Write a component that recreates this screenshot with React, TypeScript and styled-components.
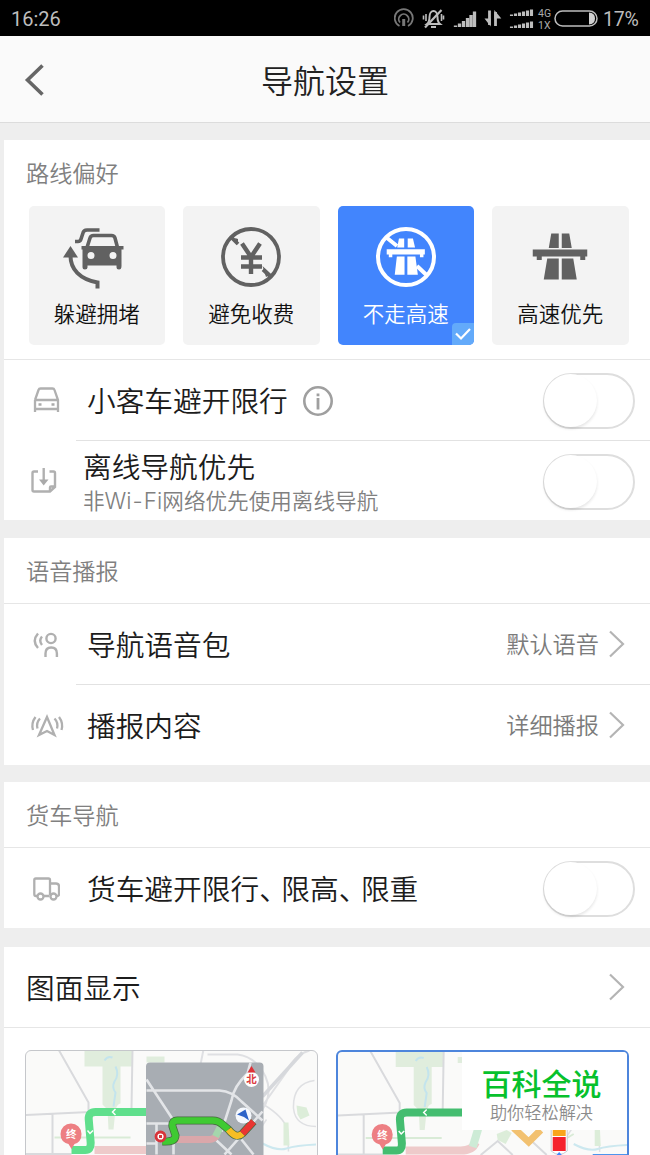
import React from 'react';
import styled, { createGlobalStyle, css } from 'styled-components';

const GlobalStyle = createGlobalStyle`
  * { box-sizing: border-box; }
  html, body { margin: 0; padding: 0; background: #eee; }
  body { font-family: Roboto, "Noto Sans CJK SC", sans-serif; color: #222; }
  svg { display: block; flex: none; }
`;

const Screen = styled.div`
  width: 650px;
  height: 1155px;
  overflow: hidden;
  background: #eee;
  display: flex;
  flex-direction: column;
`;

const StatusBar = styled.header`
  height: 36px;
  flex: none;
  background: #000;
  color: #bdbdbd;
  display: flex;
  align-items: center;
  justify-content: space-between;
  padding: 2px 11px 0;
  font-size: 20px;
  line-height: 34px;
`;

const StatusIcons = styled.div`
  display: flex;
  align-items: center;
`;

const Percent = styled.span`
  width: 36px;
  margin-left: 5px;
  padding-top: 1px;
  font-size: 19.5px;
  letter-spacing: -0.2px;
`;

const NavBar = styled.div`
  height: 87px;
  flex: none;
  background: #fafafa;
  border-bottom: 1px solid #dcdcdc;
  display: grid;
  grid-template-columns: 70px 1fr 70px;
  align-items: center;
`;

const BackButton = styled.button`
  border: 0;
  background: none;
  padding: 2px 0 0 24px;
`;

const PageTitle = styled.h1`
  margin: 0;
  font: 350 32px/44px "Noto Sans CJK SC DemiLight", "Noto Sans CJK SC", sans-serif;
  text-align: center;
`;

const Panel = styled.section<{ $gap: number; $height: number }>`
  margin: ${(p) => p.$gap}px 0 0 4px;
  height: ${(p) => p.$height}px;
  flex: none;
  background: #fff;
`;

const PanelTitle = styled.h2<{ $divided?: boolean }>`
  margin: 0;
  height: 66px;
  padding: 2px 0 0 22px;
  font-size: 23.2px;
  font-weight: 350;
  line-height: 65px;
  color: #808080;
  ${(p) => p.$divided && css`border-bottom: 1px solid #e6e6e6;`}
`;

const Tiles = styled.div`
  display: grid;
  grid-template-columns: repeat(4, 136.5px);
  column-gap: 18px;
  padding: 0 0 14px 24.5px;
  border-bottom: 1px solid #e6e6e6;
`;

const Tile = styled.button<{ $active?: boolean }>`
  position: relative;
  overflow: hidden;
  height: 139px;
  padding: 19px 0 0;
  border: 0;
  border-radius: 5px;
  background: ${(p) => (p.$active ? '#4285fd' : '#f3f3f3')};
  color: ${(p) => (p.$active ? '#fff' : '#111')};
  font: 350 21.5px/30px "Noto Sans CJK SC", sans-serif;
  display: flex;
  flex-direction: column;
  align-items: center;
  gap: 9px;
`;

const TickBadge = styled.span`
  position: absolute;
  right: 0;
  bottom: 0;
  width: 22px;
  height: 22px;
  border-top-left-radius: 4px;
  background: #63aafa;
`;

const Row = styled.div<{ $height?: number }>`
  height: ${(p) => p.$height ?? 80}px;
  display: flex;
  align-items: center;
  padding: 0 15px 0 28px;
`;

const InsetDivider = styled.div`
  height: 1px;
  margin-left: 72px;
  background: #e2e2e2;
`;

const IconSlot = styled.span<{ $width?: number }>`
  width: ${(p) => p.$width ?? 55}px;
  padding-top: 1px;
  flex: none;
`;

const Label = styled.span<{ $compact?: boolean }>`
  padding-top: ${(p) => (p.$compact ? 0 : 4)}px;
  font-size: 28.7px;
  font-weight: 350;
  line-height: 40px;
  color: #1c1c1c;
  white-space: nowrap;
`;

const Comma = styled.span`
  letter-spacing: -6.5px;
`;

const LabelStack = styled.div`
  display: flex;
  flex-direction: column;
  padding-top: 2px;
`;

const Hint = styled.span`
  font-size: 21.6px;
  font-weight: 350;
  line-height: 26px;
  color: #808080;
  white-space: nowrap;
`;

const Latin = styled.span`
  font-family: Inter, "Open Sans", sans-serif;
  font-size: 22.5px;
  font-weight: 300;
`;

const Hyphen = styled.span`
  margin: 0 1px;
`;

const Spacer = styled.span`
  flex: 1;
`;

const Value = styled.span`
  padding-top: 2px;
  font-size: 23.2px;
  font-weight: 350;
  line-height: 34px;
  color: #7b7b7b;
  margin-right: 9px;
`;

const ChevronSlot = styled.span`
  width: 27px;
`;

const SwitchTrack = styled.button`
  width: 92px;
  height: 56px;
  margin-top: 2px;
  padding: 0;
  border: 2px solid #dedede;
  border-radius: 28px;
  background: #fff;
`;

const SwitchKnob = styled.span`
  display: block;
  width: 53px;
  height: 53px;
  margin: -1px 0 0 -1px;
  border-radius: 50%;
  background: #fff;
  box-shadow: 0 2px 3px rgba(0, 0, 0, 0.1);
`;

const PreviewHeader = styled(Row)`
  padding-left: 22px;
  height: 81px;
  border-bottom: 1px solid #e6e6e6;
`;

const Previews = styled.div`
  display: grid;
  grid-template-columns: 293px 293px;
  column-gap: 18px;
  padding: 22px 0 0 21px;
`;

const PreviewCard = styled.div<{ $active?: boolean }>`
  position: relative;
  height: 180px;
  overflow: hidden;
  border: ${(p) => (p.$active ? '2px solid #4d85dc' : '1.5px solid #c5c7cb')};
  border-radius: 6px;
  background: #fafaf9;
`;

const Watermark = styled.div`
  position: absolute;
  top: 0;
  left: 124px;
  right: 0;
  height: 78px;
  padding: 12px 6px 0 0;
  background: #fff;
  display: flex;
  flex-direction: column;
  align-items: center;
`;

const Brand = styled.strong`
  font-size: 30px;
  font-weight: 500;
  line-height: 42px;
  color: #07c12c;
`;

const Slogan = styled.span`
  font-size: 17.2px;
  font-weight: 350;
  line-height: 14px;
  color: #8c8c8c;
`;

const Switch = () => (
  <SwitchTrack role="switch" aria-checked={false}>
    <SwitchKnob />
  </SwitchTrack>
);

const Chevron = () => (
  <ChevronSlot>
    <svg width="18" height="28" viewBox="0 0 18 28" fill="none" stroke="#b4b4b4" strokeWidth="2.2">
      <path d="M2 1.5 15 14 2 26.5" />
    </svg>
  </ChevronSlot>
);

const StatusGlyphs = () => (
  <svg width="204" height="30" viewBox="394 4 204 30" fill="none" stroke="#bdbdbd">
    <g stroke="#777" strokeWidth="1.8">
      <path d="M399.5 26a9 9 0 1 1 8.500 0" />
      <path d="M400 22.500a5 5 0 1 1 7.500 0" />
      <path d="M403.700 19v7" strokeWidth="3" />
    </g>
    <g strokeWidth="2">
      <path d="M427 24q2.500-2 2.500-7c0-8 8-8 8 0q0 5 2.500 7zM431 27h5" />
      <path d="M425 27.500 441.500 10" strokeWidth="2.200" />
      <path d="M426 14v7M423.500 15.500v4M441.500 14v7M443.500 15.500v4" strokeWidth="1.6" />
    </g>
    <g strokeWidth="3.3">
      <path d="M455.500 27v-1.500M459.500 27v-3.500M463.500 27v-6M467.500 27v-9M471 27v-12M474.500 27V11.500" />
    </g>
    <g strokeWidth="2.800">
      <path d="M489.500 10.500V25M495.500 26V12" />
      <path d="M484.500 18.500 490.700 26.500v-8zM494.300 10v8.500h7z" fill="#bdbdbd" stroke="none" />
    </g>
    <g strokeWidth="3.1">
      <path d="M511.500 16v-1.500M515.500 16v-2.500M519.500 16v-3.500M523.500 16v-4.500M527.500 16v-5.500M531.500 16V9.500" />
      <path d="M511.500 28v-1.500M515.500 28v-2.500M519.500 28v-3.500M523.500 28v-4.500M527.500 28v-5.500M531.500 28v-6.500" />
    </g>
    <g fill="#aaa" stroke="none" fontFamily="Roboto, sans-serif" fontSize="10.5">
      <text x="538" y="17">4G</text>
      <text x="538" y="28.500">1X</text>
    </g>
    <rect x="555" y="11" width="42" height="15" rx="7.500" strokeWidth="1.500" />
    <path d="M589 12.500q6 .5 6 6t-6 6z" fill="#d0d0d0" stroke="none" />
  </svg>
);

const CongestionIcon = () => (
  <svg width="64" height="64" viewBox="65 225 64 64" overflow="visible" fill="none" stroke="#616161" strokeWidth="4">
    <path d="M99.500 230H87q-3.500 0-4.200 3.500L81 239q-.7 2.500-3 2.500h-3" strokeWidth="3.600" />
    <path d="M87 247.500 90 238q.8-2.500 3.500-2.500h18q2.700 0 3.500 2.500l2.500 9.500" strokeWidth="3.600" />
    <path
      d="M81.500 246h42v3.500h-2V266q0 3.500-2.500 3.500T116.500 267v-1.500h-29v2q0 2-2.500 2t-2.500-2.500v-17.500h-1zM91 252a3.500 3.500 0 1 0 0 7 3.500 3.500 0 0 0 0-7m22 0a3.500 3.500 0 1 0 0 7 3.500 3.500 0 0 0 0-7"
      fill="#616161"
      fillRule="evenodd"
      stroke="none"
    />
    <path d="M70.500 246 78 257.500H63z" fill="#616161" stroke="none" />
    <path d="M70.500 256c0 13 9 23 27 26.500v6" />
  </svg>
);

const NoTollIcon = () => (
  <svg width="64" height="64" viewBox="220 225 64 64" fill="none" stroke="#616161" strokeWidth="3.800">
    <circle cx="252" cy="257" r="28" />
    <path d="M232.500 237.500 239 244M264 269.500l7.500 7" strokeWidth="3.800" />
    <path d="M236 238l3 1 0 6zM263.500 266l8.500 8-5 3z" fill="#616161" stroke="none" />
    <path d="M243 243.500 252 257 261 243.500M252 256v18M242 257.500h21M242 266.500h21" strokeWidth="4.400" />
  </svg>
);

const MotorwayIcon = () => (
  <svg width="64" height="64" viewBox="201.250 225 64 64" fill="#616161">
    <path d="M224.500 233.500h7.500v14.500h-10zM235 233.500h7.500l2.500 14.500h-10z" />
    <path d="M206 249.500h54.500v7h-2v3.500h-5v-3.500h-38.500v3.500h-5v-3.500h-4z" />
    <path d="M220.500 258.500H232v21h-15zM235 258.500h11.500l3.500 21h-15z" />
  </svg>
);

const NoMotorwayIcon = () => (
  <svg width="64" height="64" viewBox="374 225 64 64" fill="none" stroke="#fff" strokeWidth="4">
    <circle cx="406" cy="257" r="28" />
    <path d="M386.500 237.500 397 246M417 266l9.500 9" />
    <g fill="#fff" stroke="none" transform="translate(242.500 76) scale(.7 .7)">
      <path d="M223.500 232h7.500v13h-10zM236 232h7.500l3 13H236z" />
      <path d="M206 247.500h54.500v7.500h-2v4h-5v-4h-39.500v4h-5v-4h-3z" />
      <path d="M220.500 258H231.500v26h-14zM235.500 258h11.500l3.500 26h-15z" />
    </g>
  </svg>
);

const CarIcon = () => (
  <svg width="28" height="28" viewBox="33 387 28 28" fill="none" stroke="#b0b0b0" strokeWidth="2.300">
    <path d="M36 400 39.500 390q.5-1.500 2-1.500h12q1.500 0 2 1.500L59 400v12M36 400v12M36 400h23M36 409h23" />
    <path d="M39.500 403.200h3v2.600h-3zM52.500 403.200h3v2.600h-3z" fill="#aaa" stroke="none" />
  </svg>
);

const DownloadIcon = () => (
  <svg width="26" height="28" viewBox="32 467 26 28" overflow="visible" fill="none" stroke="#b0b0b0" strokeWidth="2.400">
    <path d="M38 471.500h-4q-1.500 0-1.500 1.500v17q0 1.500 1.500 1.500h16l5-4.500v-14q0-1.500-1.500-1.500h-4M55 486.500h-4q-1 0-1 1v4" />
    <path d="M43.700 468v14" />
    <path d="m39 479.500 4.700 6 4.800-6z" fill="#aaa" stroke="none" />
  </svg>
);

const InfoIcon = () => (
  <svg width="32" height="32" viewBox="0 0 32 32" fill="none" stroke="#9f9f9f" strokeWidth="2.600">
    <circle cx="16" cy="16" r="13.700" />
    <path d="M16 13v11.500M16 8.500v2.700" strokeWidth="2.800" />
  </svg>
);

const VoiceIcon = () => (
  <svg width="28" height="28" viewBox="32 631 28 28" fill="none" stroke="#b0b0b0" strokeWidth="2.400">
    <circle cx="51" cy="638.500" r="4.600" />
    <path d="M45.500 657v-3.500q0-6 5.700-6t5.700 6v3.500" />
    <path d="M38 633.500q-6.500 7.500 0 14.500M42 636.500q-3.500 4 0 8.500" />
  </svg>
);

const BroadcastIcon = () => (
  <svg width="32" height="28" viewBox="32 711 32 28" overflow="visible" fill="none" stroke="#b0b0b0" strokeWidth="2.300">
    <path d="m47 716 7.500 18-7.500-4-8 4z" />
    <path d="M40 717.500q-4 4-2.500 10M35.500 716q-4.500 6-2.500 13M54.500 717.500q4 4 2.500 10M59 716q4.500 6 2.500 13" />
  </svg>
);

const TruckIcon = () => (
  <svg width="28" height="26" viewBox="32.500 876 28 26" fill="none" stroke="#b0b0b0" strokeWidth="2.300">
    <path d="M37.500 896h-1q-1.700 0-1.700-1.700V880q0-1.500 1.500-1.500H49q1.500 0 1.500 1.500v15M44 896h6M50.500 883.500h6q3 0 3 3v8q0 1.500-2.500 1.500" />
    <circle cx="41" cy="896.500" r="3" />
    <circle cx="54" cy="896.500" r="3" />
  </svg>
);

const MapBase = ({ route }: { route: string }) => (
  <>
    <path d="M85 1050h48v17h-12v37q-3 0-5 6l-2 20h-5l-1-20-5-5v-38H85zM147 1057h18v6h-18z" fill="#e0eddd" />
    <path d="M105 1061q3-5 8-3M116 1067q4 8-1 15-3 6 1 11l-2 14" stroke="#c3e4ed" strokeWidth="2" />
    <g stroke="#dfe0e3" strokeWidth="2">
      <path d="M59 1050 89 1103V1113M26 1115.500 90 1112.500M53 1115v40M133 1050l-1 60M26 1154.500h46" stroke="#d9dadd" />
      <path d="M204 1050l-5 25M208 1055h30q18 2 28 22 9 20-8 40M310 1051q-15 4-22 20l-24 34" />
      <path d="M315 1081q-22 3-21 28 2 18 23 18M264 1105q20 12 24 25l1 22M247 1150l20-30" strokeWidth="1.500" />
    </g>
    <path d="M303 1053 263 1097" stroke="#d6d8dc" strokeWidth="3.500" />
    <path d="M55 1138h76M253 1140l10-6" stroke="#d9ebd7" strokeWidth="2" />
    <path d="M297 1106l10 2 3 8-9 4-3-5zM284 1123h5l1 23h-6z" fill="#dcedd9" />
    <path d="M263 1144q15 8 24 5t30-4" stroke="#cce8ef" strokeWidth="2" />
    <path d="M95 1150.500H150q12 0 15-8" stroke="#eecaca" strokeWidth="8" />
    <path d="M153 1112.500H96q-7 0-6.800 7l2 24q.3 7-5.500 7H72" stroke={route} strokeWidth="8" />
    <path d="m116 1109.500-3 3 3 3M88 1131l2.500 3 3-3" stroke="#fff" strokeWidth="1.500" />
    <path d="M61 1134.500a10.500 10.500 0 1 1 21 0q0 8-7 10l-3 5-3-5q-8-2-8-10" fill="#ed7f83" />
    <text x="71.700" y="1138.500" textAnchor="middle" fontSize="10.500" fontWeight="700" fill="#fff">终</text>
  </>
);

const InsetPreview = () => (
  <svg width="290" height="105" viewBox="26.500 1051.500 290 105" fill="none">
    <MapBase route="#5fdf8c" />
    <rect x="146.500" y="1063" width="117.500" height="100" rx="4" fill="#a8adb3" />
    <g stroke="#e3e5e8" strokeWidth="2.600">
      <path d="M147 1091h73q13 1 22 11l21 19M147 1080l27 41v34M251 1063l-3 11q-14 13-16 27l-10 31M147 1124h23M157 1123v32M147 1144h10M217 1141l15 14M263 1112l-38 43M242 1140l12 15" />
    </g>
    <path d="M176 1140h34q5 0 8-5" stroke="#dba7aa" strokeWidth="7" />
    <path d="m216 1137 5-10" stroke="#a5d6ac" strokeWidth="7" />
    <path d="M163 1142q13 1 13-6l-3-9q-1-6 5-6h35q6 0 10 4l6 5q8 10 14 4l11-12" stroke="#466b40" strokeWidth="8" />
    <path d="M163 1142q13 1 13-6l-3-9q-1-6 5-6h35q6 0 10 4l6 5" stroke="#3fca32" strokeWidth="6.500" />
    <path d="M229 1130q8 10 14 4" stroke="#f6be24" strokeWidth="6.500" />
    <path d="m243 1134 11-12" stroke="#e93632" strokeWidth="6.500" />
    <circle cx="161" cy="1137" r="4.500" fill="#fff" stroke="#d8343b" strokeWidth="2.800" />
    <path d="M159.500 1135.500h3v3h-3z" fill="#d8343b" />
    <circle cx="252" cy="1080" r="7.500" fill="#fff" />
    <path d="m252 1066.500 4 6.500h-8z" fill="#e03138" />
    <text x="252" y="1083.700" textAnchor="middle" fontSize="10.500" fontWeight="700" fill="#dc3c42">北</text>
    <circle cx="244" cy="1116" r="8" fill="#f5f8fd" />
    <path d="m237.500 1115 8.500-5 3.500 11-5-3.500z" fill="#2d63c8" />
  </svg>
);

const BarPreview = () => (
  <svg width="289" height="105" viewBox="27.300 1052 289 105" fill="none">
    <MapBase route="#44bd70" />
    <path d="m162 1147 6-20" stroke="#cdebd6" strokeWidth="8" />
    <path d="M186 1134l10-4 5 3-6 11-8-4z" fill="#dcedd9" />
    <path d="M170 1155l17-14 15 14M222 1142l14 13" stroke="#d9dadd" strokeWidth="2" />
    <path d="m203 1128 15 14 12-12" stroke="#f2c170" strokeWidth="7" />
    <path d="M240.500 1120h16v31q-8 7-16 0z" fill="#fff" stroke="#c9cbd0" />
    <path d="M242 1127h13v9h-13z" fill="#f9a51c" />
    <path d="M242 1137h13v14h-13z" fill="#f5222d" />
    <path d="m245 1156 3.500-4 3.500 4z" fill="#4285fd" />
    <path d="M282 1155h35" stroke="#4d95ee" strokeWidth="2" />
  </svg>
);

export default function App() {
  return (
    <>
      <GlobalStyle />
      <Screen>
        <StatusBar>
          <span>16:26</span>
          <StatusIcons>
            <StatusGlyphs />
            <Percent>17%</Percent>
          </StatusIcons>
        </StatusBar>
        <NavBar>
          <BackButton aria-label="返回">
            <svg width="22" height="34" viewBox="0 0 22 34" fill="none" stroke="#666" strokeWidth="3.600">
              <path d="M18.500 2.500 3.500 17l15 14.500" />
            </svg>
          </BackButton>
          <PageTitle>导航设置</PageTitle>
        </NavBar>

        <Panel $gap={17} $height={380}>
          <PanelTitle>路线偏好</PanelTitle>
          <Tiles>
            <Tile><CongestionIcon />躲避拥堵</Tile>
            <Tile><NoTollIcon />避免收费</Tile>
            <Tile $active>
              <NoMotorwayIcon />不走高速
              <TickBadge>
                <svg width="22" height="22" viewBox="0 0 22 22" fill="none" stroke="#fff" strokeWidth="2.200">
                  <path d="m4 10.500 5 5 9-9.500" />
                </svg>
              </TickBadge>
            </Tile>
            <Tile><MotorwayIcon />高速优先</Tile>
          </Tiles>
          <Row>
            <IconSlot><CarIcon /></IconSlot>
            <Label>小客车避开限行</Label>
            <IconSlot $width={46}>
              <svg width="46" height="32" viewBox="-14 0 46 32"><InfoIcon /></svg>
            </IconSlot>
            <Spacer />
            <Switch />
          </Row>
          <InsetDivider />
          <Row $height={79}>
            <IconSlot $width={51}><DownloadIcon /></IconSlot>
            <LabelStack>
              <Label $compact>离线导航优先</Label>
              <Hint>非<Latin>Wi<Hyphen>-</Hyphen>Fi</Latin>网络优先使用离线导航</Hint>
            </LabelStack>
            <Spacer />
            <Switch />
          </Row>
        </Panel>

        <Panel $gap={18} $height={227}>
          <PanelTitle $divided>语音播报</PanelTitle>
          <Row>
            <IconSlot><VoiceIcon /></IconSlot>
            <Label>导航语音包</Label>
            <Spacer />
            <Value>默认语音</Value>
            <Chevron />
          </Row>
          <InsetDivider />
          <Row>
            <IconSlot><BroadcastIcon /></IconSlot>
            <Label>播报内容</Label>
            <Spacer />
            <Value>详细播报</Value>
            <Chevron />
          </Row>
        </Panel>

        <Panel $gap={17} $height={146}>
          <PanelTitle $divided>货车导航</PanelTitle>
          <Row>
            <IconSlot><TruckIcon /></IconSlot>
            <Label>
              货车避开限行<Comma>、</Comma>限高<Comma>、</Comma>限重
            </Label>
            <Spacer />
            <Switch />
          </Row>
        </Panel>

        <Panel $gap={19} $height={260}>
          <PreviewHeader>
            <Label>图面显示</Label>
            <Spacer />
            <Chevron />
          </PreviewHeader>
          <Previews>
            <PreviewCard><InsetPreview /></PreviewCard>
            <PreviewCard $active>
              <BarPreview />
              <Watermark>
                <Brand>百科全说</Brand>
                <Slogan>助你轻松解决</Slogan>
              </Watermark>
            </PreviewCard>
          </Previews>
        </Panel>
      </Screen>
    </>
  );
}
